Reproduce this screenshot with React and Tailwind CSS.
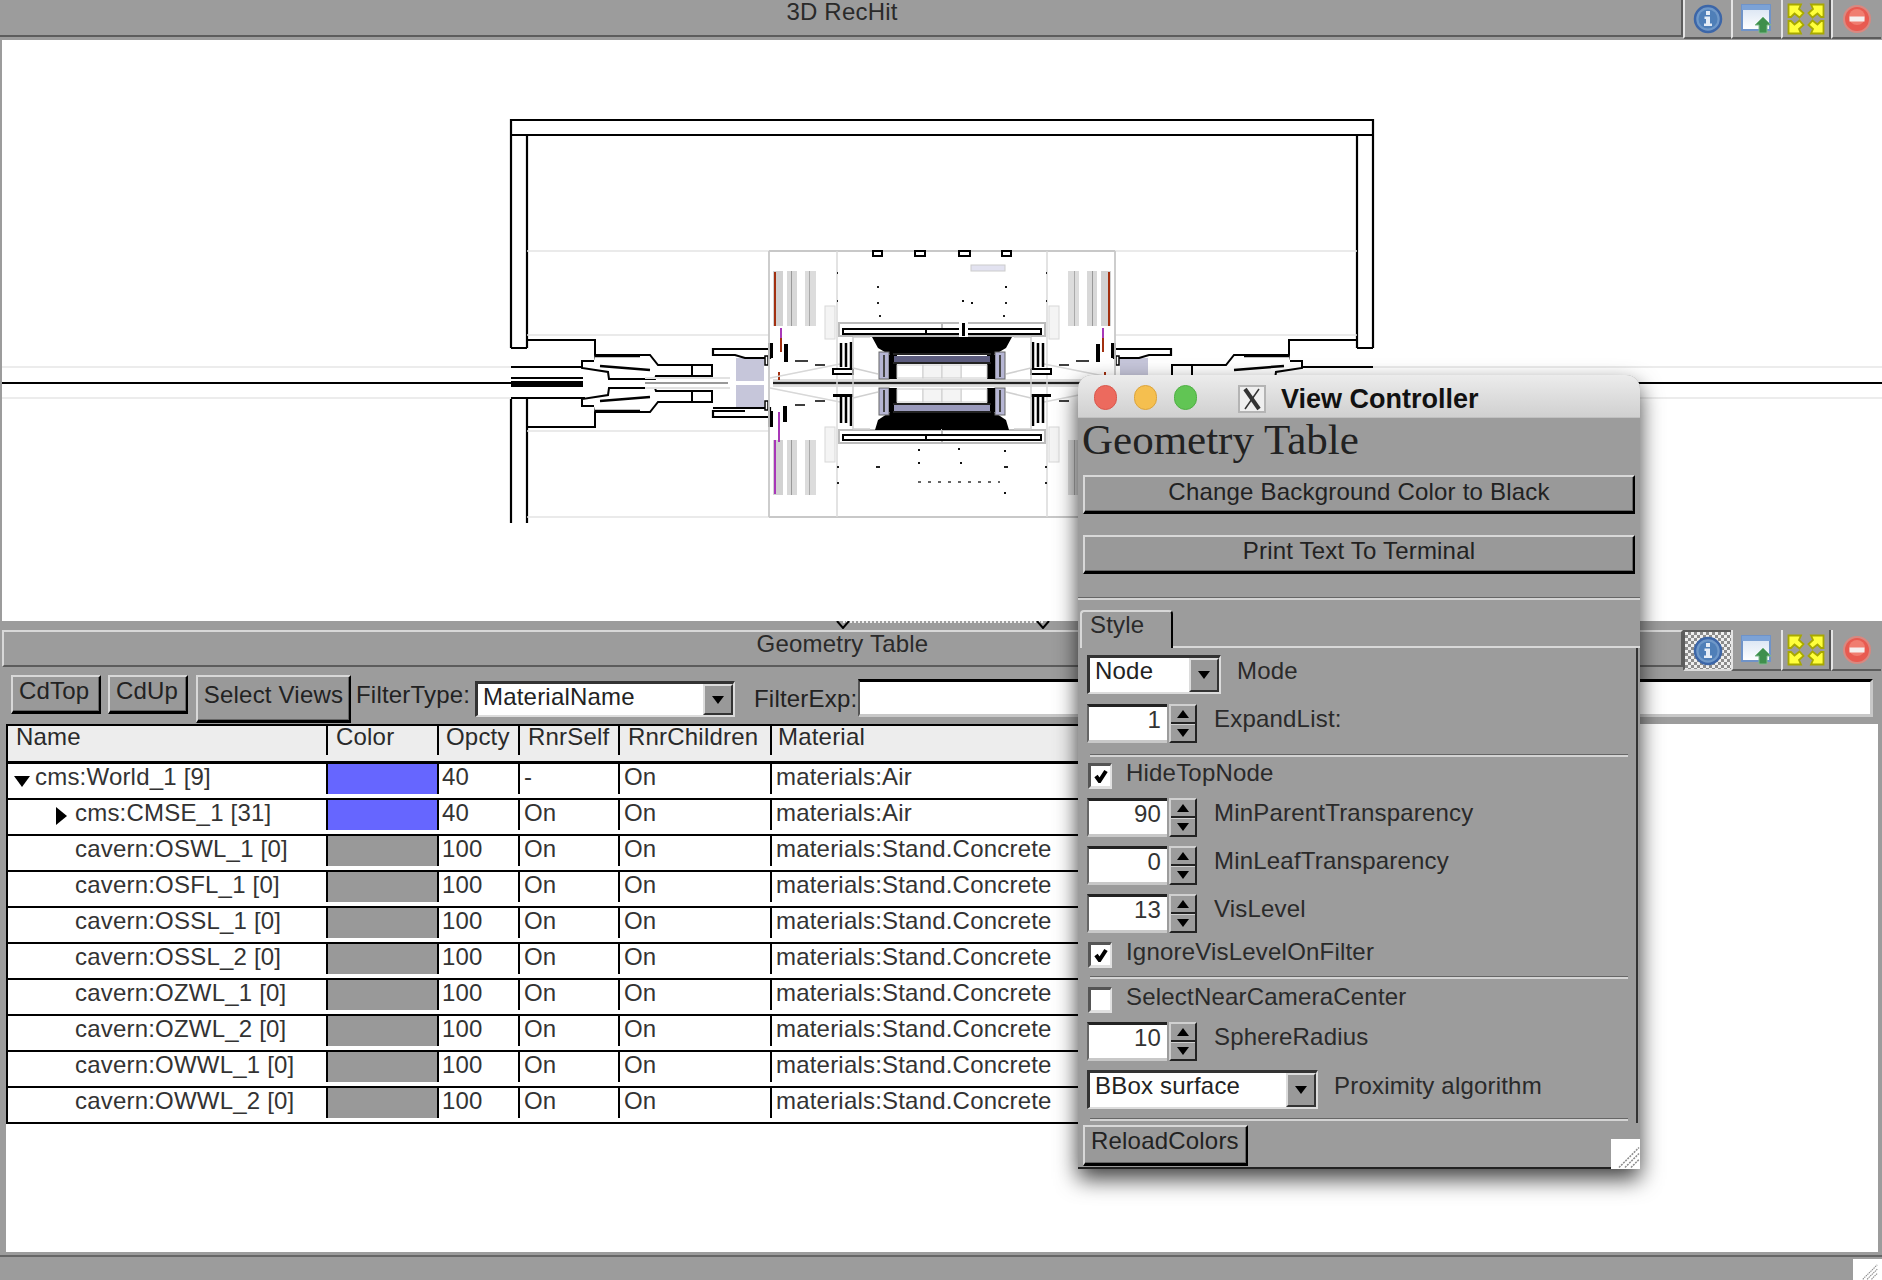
import React from "react";

const InfoIcon = () => (
  <svg width="30" height="30" viewBox="0 0 30 30">
    <circle cx="15" cy="15" r="13" fill="#6f98c8" stroke="#3c66a8" strokeWidth="2.5" />
    <circle cx="15" cy="15" r="9.5" fill="#4f7fb8" />
    <rect x="13" y="7" width="4" height="4" fill="#e4ecf6" />
    <path d="M11.5 12.5h5.5v7h2v2.5h-8v-2.5h2v-4.500h-1.500z" fill="#e4ecf6" />
  </svg>
);
const WindowIcon = () => (
  <svg width="32" height="30" viewBox="0 0 32 30">
    <defs>
      <linearGradient id="winfill" x1="0" y1="0" x2="0" y2="1">
        <stop offset="0" stopColor="#d6e2f2" />
        <stop offset="1" stopColor="#ffffff" />
      </linearGradient>
    </defs>
    <rect x="1" y="1" width="28" height="25" fill="url(#winfill)" stroke="#6f93c8" strokeWidth="2" />
    <rect x="1" y="1" width="28" height="5" fill="#7ca2d6" />
    <path d="M22 13l8 8h-4v8h-8v-8h-4z" fill="#3f8f4c" stroke="#7fb98a" strokeWidth="1" />
  </svg>
);
const MaxIcon = () => (
  <svg width="38" height="32" viewBox="0 0 38 32">
    <g fill="#ffff3c" stroke="#a8a800" strokeWidth="1.800">
      <path d="M1.500 1.500H14L12 6L16.500 10L12.500 14.500L7.500 10.500L4 14H1.500Z" />
      <path d="M36.500 1.500H24L26 6L21.500 10L25.500 14.500L30.500 10.500L34 14H36.500Z" />
      <path d="M1.500 30.500H14L12 26L16.500 22L12.500 17.500L7.500 21.500L4 18H1.500Z" />
      <path d="M36.500 30.500H24L26 26L21.500 22L25.500 17.500L30.500 21.500L34 18H36.500Z" />
    </g>
  </svg>
);
const CloseIcon = () => (
  <svg width="30" height="30" viewBox="0 0 30 30">
    <circle cx="15" cy="15" r="13" fill="#e85a50" stroke="#d98880" strokeWidth="2" />
    <circle cx="15" cy="13" r="8" fill="#f07d70" />
    <rect x="7.500" y="12.500" width="15" height="5" fill="#f6efee" />
  </svg>
);

function IconButtons({ checker }) {
  return (
    <div className="flex h-full">
      <div
        className={
          checker
            ? "w-[48px] flex items-center justify-center border-l-2 border-t-2 border-[#5c5c5c] border-b-2 border-b-[#dcdcdc] bg-[repeating-conic-gradient(#8c8c8c_0_25%,#eeeeee_0_50%)] bg-[length:6px_6px]"
            : "w-[48px] flex items-center justify-center border-l-2 border-[#e4e4e4] border-b-2 border-b-[#5c5c5c]"
        }
      >
        <InfoIcon />
      </div>
      <div className="w-[50px] flex items-center justify-center border-l-2 border-[#e4e4e4] border-b-2 border-b-[#5c5c5c]">
        <WindowIcon />
      </div>
      <div className="w-[50px] flex items-center justify-center border-l-2 border-[#e4e4e4] border-r-2 border-r-[#555] border-b-2 border-b-[#5c5c5c]">
        <MaxIcon />
      </div>
      <div className="w-[50px] flex items-center justify-center border-l-2 border-[#e4e4e4] border-b-2 border-b-[#5c5c5c]">
        <CloseIcon />
      </div>
    </div>
  );
}

const Half = () => (
  <g>
    {/* wall */}
    <path d="M511 348V119M527 135V348M511 348H527M511 523V399M527 523V399" fill="none" stroke="#000" strokeWidth="2.200" />
    <path d="M527 340H595V360M527 427H595V407" fill="none" stroke="#000" strokeWidth="2" />
    <path d="M527 251H769M527 335H769M527 431H769M527 517H769" stroke="#e4e4e4" strokeWidth="1.500" />
    <path d="M0 367H511M0 398H511" stroke="#e6e6e6" strokeWidth="1.500" />
    {/* beam pipe region */}
    <path d="M511 367H585M511 398H585M511 378H583" stroke="#000" strokeWidth="2" />
    <rect x="511" y="381" width="72" height="6" fill="#000" />
    <path d="M595 355H650L658 365H712V376H656L655 379H609L608 372L582 368V361H594" fill="#fff" stroke="#000" strokeWidth="2" />
    <path d="M595 412H650L658 402H712V391H656L655 388H609L608 395L582 399V406H594" fill="#fff" stroke="#000" strokeWidth="2" />
    <path d="M595 356H640M595 411H640M600 366L650 370M600 401L650 397" stroke="#000" strokeWidth="2.500" />
    <path d="M692 365V376M692 391V402" stroke="#000" strokeWidth="2" />
    <path d="M645 378H730M645 388H730" stroke="#e2e2e2" strokeWidth="2" />
    {/* axis */}
    <path d="M0 383H583" stroke="#000" strokeWidth="2" />
    <path d="M645 383H728" stroke="#777" strokeWidth="1.500" />
    <path d="M773 383H942" stroke="#222" strokeWidth="2.500" />
    <path d="M773 380H942M773 386H942" stroke="#bbb" strokeWidth="1" />
    {/* HF plug */}
    <rect x="736" y="358" width="28" height="23" fill="#c6c6da" />
    <rect x="736" y="385" width="28" height="24" fill="#c6c6da" />
    <path d="M713 349H770V358H745L735 355H713ZM713 408H770V417H713V411H745" fill="#fff" stroke="#000" strokeWidth="2.200" />
    <rect x="768" y="343" width="5" height="15" fill="#000" />
    <rect x="768" y="411" width="5" height="16" fill="#000" />
    <rect x="765" y="356" width="3" height="9" fill="#fff" stroke="#000" strokeWidth="1.500" />
    <rect x="765" y="401" width="3" height="9" fill="#fff" stroke="#000" strokeWidth="1.500" />
    {/* frame */}
    <path d="M769 251H942M769 517H942M769 251V517" fill="none" stroke="#c8c8c8" strokeWidth="1.800" />
    <path d="M837 251V517" stroke="#dadada" strokeWidth="1.500" />
    {/* small chambers on top */}
    <rect x="873" y="251" width="9" height="5" fill="#fff" stroke="#000" strokeWidth="2" />
    <rect x="915" y="251" width="10" height="5" fill="#fff" stroke="#000" strokeWidth="2" />
    {/* muon stripes */}
    <rect x="773" y="271" width="10" height="55" fill="#d2d2d2" />
    <rect x="774" y="272" width="2" height="54" fill="#a23010" />
    <rect x="787" y="271" width="10" height="55" fill="#d8d8d8" />
    <rect x="791" y="271" width="1" height="55" fill="#999" />
    <rect x="805" y="271" width="11" height="55" fill="#dcdcdc" />
    <rect x="809" y="271" width="1" height="55" fill="#aaa" />
    <rect x="773" y="440" width="10" height="55" fill="#d2d2d2" />
    <rect x="774" y="440" width="2" height="54" fill="#a838b8" />
    <rect x="787" y="440" width="10" height="55" fill="#d8d8d8" />
    <rect x="791" y="440" width="1" height="55" fill="#999" />
    <rect x="805" y="440" width="11" height="55" fill="#dcdcdc" />
    <rect x="809" y="440" width="1" height="55" fill="#aaa" />
    <rect x="825" y="306" width="10" height="33" fill="#f4f4f4" stroke="#d8d8d8" />
    <rect x="825" y="427" width="10" height="35" fill="#f4f4f4" stroke="#d8d8d8" />
    <rect x="780" y="328" width="2" height="16" fill="#a838b8" />
    <rect x="780" y="338" width="2" height="14" fill="#a23010" />
    <rect x="778" y="412" width="2" height="30" fill="#a838b8" />
    <rect x="778" y="372" width="2" height="8" fill="#a23010" />
    <rect x="784" y="344" width="4" height="18" fill="#000" />
    <rect x="783" y="406" width="4" height="16" fill="#000" />
    <path d="M795 361H808M815 365H825M795 405H805M815 401H825" stroke="#000" strokeWidth="1.500" />
    <path d="M770 378L840 364M770 388L840 402" stroke="#d8d8d8" strokeWidth="1.500" />
    {/* central detector */}
    <rect x="839" y="323" width="103" height="13" fill="#fff" stroke="#bbb" strokeWidth="2" />
    <rect x="843" y="329" width="115" height="5" fill="#fff" stroke="#000" strokeWidth="2" />
    <rect x="839" y="430" width="103" height="13" fill="#fff" stroke="#bbb" strokeWidth="2" />
    <rect x="843" y="435" width="115" height="5" fill="#fff" stroke="#000" strokeWidth="2" />
    <path d="M841 343V367M846 343V367M851 342V369" stroke="#000" strokeWidth="2.500" />
    <path d="M841 397V423M846 397V423M851 394V426" stroke="#000" strokeWidth="2.500" />
    <rect x="833" y="369" width="20" height="5" fill="#fff" stroke="#000" strokeWidth="2" />
    <rect x="833" y="394" width="20" height="3" fill="#000" />
    <path d="M853 337L870 337M853 429L870 429M853 337V429" fill="none" stroke="#d0d0d0" strokeWidth="1.500" />
    <path d="M853 368L878 374M853 398L878 392" stroke="#d0d0d0" strokeWidth="1.500" />
    <path d="M872 337H942V355H890L878 348ZM875 430H942V412H890L878 420Z" fill="#000" />
    <rect x="879" y="352" width="10" height="27" fill="#b6b6d4" stroke="#666" />
    <rect x="879" y="388" width="10" height="27" fill="#b6b6d4" stroke="#666" />
    <rect x="883" y="355" width="2" height="22" fill="#444" />
    <rect x="883" y="390" width="2" height="22" fill="#444" />
    <rect x="889" y="355" width="8" height="24" fill="#000" />
    <rect x="889" y="388" width="8" height="24" fill="#000" />
    <rect x="894" y="356" width="48" height="6" fill="#5c5c7e" />
    <rect x="894" y="405" width="48" height="6" fill="#9a9abc" />
    <path d="M893 354H942M893 363H942M893 404H942M893 412H942" stroke="#222" strokeWidth="2" />
    <rect x="897" y="365" width="26" height="13" fill="#fff" stroke="#ccc" />
    <rect x="923" y="365" width="19" height="13" fill="#f4f4f4" stroke="#ccc" />
    <rect x="897" y="389" width="26" height="13" fill="#fff" stroke="#ccc" />
    <rect x="923" y="389" width="19" height="13" fill="#f4f4f4" stroke="#ccc" />
    {/* dots */}
    <path d="M877 286h2v2h-2zM837 272h1v2h-1zM837 300h1v2h-1zM877 302h2v2h-2zM879 315h2v2h-2zM837 466h2v2h-2zM837 482h2v2h-2zM876 466h4v2h-4z" fill="#222" />
  </g>
);

const Detector = () => (
  <svg className="block w-full h-full" viewBox="2 40 1880 581">
    <path d="M511 120H1373M511 135H1373" stroke="#000" strokeWidth="2.200" />
    <Half />
    <g transform="translate(1884 0) scale(-1 1)">
      <Half />
    </g>
    <rect x="959" y="251" width="11" height="5" fill="#fff" stroke="#000" strokeWidth="2" />
    <rect x="971" y="265" width="34" height="6" fill="#e2e2f0" stroke="#ccc" />
    <rect x="959" y="322" width="9" height="15" fill="#fff" />
    <rect x="962" y="323" width="3" height="13" fill="#000" />
    <path d="M962 300h2v2h-2zM971 302h2v2h-2zM1005 286h2v2h-2zM958 448h2v2h-2zM960 462h2v2h-2zM918 449h2v2h-2zM918 462h2v2h-2zM1004 450h2v2h-2zM1004 492h2v2h-2z" fill="#111" />
    <path d="M918 482H1000" stroke="#333" strokeWidth="1.500" strokeDasharray="3 7" />
  </svg>
);

const rows = [
  { n: "cms:World_1 [9]", c: "#6666ff", o: "40", s: "-", ch: "On", m: "materials:Air", open: true },
  { n: "cms:CMSE_1 [31]", c: "#6666ff", o: "40", s: "On", ch: "On", m: "materials:Air", closed: true },
  ...["OSWL_1", "OSFL_1", "OSSL_1", "OSSL_2", "OZWL_1", "OZWL_2", "OWWL_1", "OWWL_2"].map((x) => ({
    n: `cavern:${x} [0]`,
    c: "#999999",
    o: "100",
    s: "On",
    ch: "On",
    m: "materials:Stand.Concrete",
  })),
];

const btn =
  "bg-[#999] border-t-2 border-l-2 border-t-[#d8d8d8] border-l-[#d8d8d8] border-b-[3px] border-r-2 border-b-black border-r-black shadow-[inset_-1px_-1px_0_#666]";

function ArrowBtn() {
  return (
    <div className="w-[30px] flex items-center justify-center bg-[#999] border-2 border-t-[#dcdcdc] border-l-[#dcdcdc] border-b-[#333] border-r-[#333]">
      <svg width="14" height="8" viewBox="0 0 14 8">
        <path d="M1 0h12L7 8z" fill="#000" />
      </svg>
    </div>
  );
}

function Combo({ text, cls }) {
  return (
    <div className={`${cls} flex bg-white border-t-[3px] border-l-[3px] border-t-[#333] border-l-[#333] border-b-2 border-r-2 border-b-[#dcdcdc] border-r-[#dcdcdc] text-[#222]`}>
      <div className="flex-1 pl-[5px] leading-[25px] whitespace-pre">{text}</div>
      <ArrowBtn />
    </div>
  );
}

function Spinner({ value }) {
  return (
    <div className="flex h-[39px]">
      <div className="w-[80px] bg-white border-t-[3px] border-l-[2px] border-t-[#222] border-l-[#666] border-b-[3px] border-b-[#c8c8c8] text-right pr-[6px] leading-[26px] text-[#333]">
        {value}
      </div>
      <div className="w-[28px] ml-[2px] flex flex-col border-2 border-t-[#d0d0d0] border-l-[#d0d0d0] border-b-[#222] border-r-[#222]">
        <div className="flex-1 flex items-center justify-center border-b-2 border-b-[#222]">
          <svg width="14" height="8" viewBox="0 0 14 8"><path d="M1 8h12L7 0z" fill="#000" /></svg>
        </div>
        <div className="flex-1 flex items-center justify-center border-t border-t-[#d0d0d0]">
          <svg width="14" height="8" viewBox="0 0 14 8"><path d="M1 0h12L7 8z" fill="#000" /></svg>
        </div>
      </div>
    </div>
  );
}

function SpinRow({ value, label, mt }) {
  return (
    <div className={`flex ${mt}`}>
      <Spinner value={value} />
      <div className="ml-[17px] leading-[30px] text-[#2a2a2a] whitespace-pre">{label}</div>
    </div>
  );
}

function CheckRow({ label, checked, mt }) {
  return (
    <div className={`flex h-[26px] pl-[1px] ${mt}`}>
      <div className="w-[24px] h-[26px] bg-white border-t-[3px] border-l-[3px] border-t-[#555] border-l-[#555] border-b-[3px] border-r-2 border-b-[#e0e0e0] border-r-[#e0e0e0] flex items-center justify-center">
        {checked && (
          <svg width="14" height="14" viewBox="0 0 14 14">
            <path d="M2 7l3.500 5L12 2" fill="none" stroke="#000" strokeWidth="4" />
          </svg>
        )}
      </div>
      <div className="ml-[14px] leading-[20px] text-[#2a2a2a] whitespace-pre">{label}</div>
    </div>
  );
}

const Sep = ({ mt }) => <div className={`h-[3px] ml-[3px] mr-[6px] border-t border-t-[#666] border-b-2 border-b-[#d4d4d4] ${mt}`} />;

function Grip({ cls }) {
  return (
    <div className={cls}>
      <svg className="block w-full h-full" viewBox="0 0 29 29">
        <path d="M8 28L28 8M14 28L28 14M20 28L28 20" stroke="#8c8c8c" strokeWidth="1.500" strokeDasharray="2 1" />
      </svg>
    </div>
  );
}

function ViewController() {
  return (
    <div className="absolute left-[1078px] top-[375px] w-[562px] h-[794px] flex flex-col rounded-t-[14px] bg-[#9c9c9c] shadow-[0_10px_22px_rgba(0,0,0,0.75)]">
      <div className="h-[43px] pt-[2px] flex items-center rounded-t-[14px] bg-gradient-to-b from-[#ececec] to-[#d0d0d0] border-b border-b-[#c0c0c0] relative">
        <div className="ml-[16px] w-[23px] h-[25px] rounded-full bg-[#ec6a5e] border border-[#d9574c]" />
        <div className="ml-[17px] w-[23px] h-[25px] rounded-full bg-[#f5bf4f] border border-[#dca43c]" />
        <div className="ml-[17px] w-[23px] h-[25px] rounded-full bg-[#61c554] border border-[#4fb044]" />
        <svg className="ml-[41px] mt-[3px]" width="28" height="28" viewBox="0 0 28 28">
          <rect x="1" y="1" width="26" height="26" fill="#efefef" stroke="#b4b4b4" strokeWidth="2" />
          <path d="M7 4L21 24" stroke="#333" strokeWidth="4" />
          <path d="M21 4L7 24" stroke="#333" strokeWidth="1.500" />
        </svg>
        <div className="ml-[15px] mt-[3px] text-[27px] leading-[32px] tracking-normal font-bold text-[#111] whitespace-pre">View Controller</div>
      </div>
      <div className="h-[57px] pl-[4px] font-['Liberation_Serif',serif] text-[43px] leading-[44px] tracking-normal text-[#222] whitespace-pre">Geometry Table</div>
      <div className={`mx-[5px] h-[39px] ${btn} text-center leading-[29px] text-[#222]`}>Change Background Color to Black</div>
      <div className={`mx-[5px] mt-[21px] h-[39px] ${btn} text-center leading-[28px] text-[#222]`}>Print Text To Terminal</div>
      <div className="mt-[23px] h-[3px] border-t border-t-[#666] border-b-2 border-b-[#d4d4d4]" />
      <div className="mt-[10px] h-[38px] flex">
        <div className="ml-[2px] w-[93px] pl-[8px] leading-[26px] rounded-t-[4px] border-t-2 border-l-2 border-t-[#d8d8d8] border-l-[#d8d8d8] border-r-2 border-r-black text-[#2a2a2a]">Style</div>
        <div className="flex-1 border-b-2 border-b-[#d8d8d8]" />
      </div>
      <div className="ml-[2px] mr-[2px] h-[475px] pl-[7px] pr-[2px] pt-[7px] border-r-2 border-r-[#333] flex flex-col">
        <div className="flex">
          <Combo text="Node" cls="w-[134px] h-[39px]" />
          <div className="ml-[16px] leading-[31px] text-[#2a2a2a]">Mode</div>
        </div>
        <SpinRow value="1" label="ExpandList:" mt="mt-[10px]" />
        <Sep mt="mt-[11px]" />
        <CheckRow label="HideTopNode" checked mt="mt-[6px]" />
        <SpinRow value="90" label="MinParentTransparency" mt="mt-[9px]" />
        <SpinRow value="0" label="MinLeafTransparency" mt="mt-[9px]" />
        <SpinRow value="13" label="VisLevel" mt="mt-[9px]" />
        <CheckRow label="IgnoreVisLevelOnFilter" checked mt="mt-[9px]" />
        <Sep mt="mt-[8px]" />
        <CheckRow label="SelectNearCameraCenter" mt="mt-[8px]" />
        <SpinRow value="10" label="SphereRadius" mt="mt-[9px]" />
        <div className="flex mt-[9px]">
          <Combo text="BBox surface" cls="w-[231px] h-[39px]" />
          <div className="ml-[16px] leading-[31px] text-[#2a2a2a] whitespace-pre">Proximity algorithm</div>
        </div>
        <Sep mt="mt-[9px]" />
      </div>
      <div className={`absolute left-[5px] top-[750px] w-[165px] h-[41px] ${btn} pl-[6px] leading-[28px] text-[#222]`}>ReloadColors</div>
      <div className="absolute left-0 right-0 bottom-0 h-[2px] bg-[#222]" />
      <Grip cls="absolute right-0 bottom-0 w-[29px] h-[30px] bg-white" />
    </div>
  );
}

export default function App() {
  const grid = "grid grid-cols-[318px_2px_109px_2px_79px_2px_98px_2px_150px_2px_1fr]";
  return (
    <div className="relative w-[1882px] h-[1280px] overflow-hidden bg-[#9c9c9c] flex flex-col font-['Liberation_Sans',sans-serif] text-[24px] tracking-[0.2px] text-[#222]">
      {/* top title */}
      <div className="h-[40px] flex">
        <div className="w-[1683px] h-[37px] border-b-2 border-r-2 border-[#5c5c5c] text-center leading-[24px] text-[#2a2a2a] pl-[3px]">3D RecHit</div>
        <div className="flex-1 h-[39px]"><IconButtons /></div>
      </div>
      {/* canvas */}
      <div className="ml-[2px] h-[581px] bg-white">
        <Detector />
      </div>
      {/* splitter */}
      <div className="h-[9px] relative">
        <div className="absolute left-[843px] top-0 w-[200px] border-t-2 border-dotted border-t-[#eee]" />
        <svg className="absolute left-[836px] top-0" width="14" height="8" viewBox="0 0 14 8"><path d="M1 0l6 7 6-7" fill="none" stroke="#000" strokeWidth="2" /></svg>
        <svg className="absolute left-[1036px] top-0" width="14" height="8" viewBox="0 0 14 8"><path d="M1 0l6 7 6-7" fill="none" stroke="#000" strokeWidth="2" /></svg>
      </div>
      {/* geometry title */}
      <div className="h-[41px] flex pl-[2px]">
        <div className="w-[1681px] h-[37px] border-t-2 border-l-2 border-t-[#d8d8d8] border-l-[#d8d8d8] border-b-2 border-r-2 border-b-[#5c5c5c] border-r-[#5c5c5c] text-center leading-[24px] text-[#2a2a2a]">Geometry Table</div>
        <div className="flex-1"><IconButtons checker /></div>
      </div>
      {/* toolbar */}
      <div className="h-[53px] flex items-start pl-[11px] pt-[4px]">
        <div className={`w-[90px] h-[39px] ${btn} pl-[6px] leading-[28px] text-[#222]`}>CdTop</div>
        <div className={`ml-[7px] w-[80px] h-[39px] ${btn} pl-[6px] leading-[28px] text-[#222]`}>CdUp</div>
        <div className={`ml-[8px] w-[155px] h-[48px] ${btn} text-center leading-[36px] text-[#222] whitespace-pre`}>Select Views</div>
        <div className="ml-[5px] w-[115px] leading-[40px] text-[#222] whitespace-pre">FilterType:</div>
        <Combo text="MaterialName" cls="ml-[4px] mt-[6px] w-[260px] h-[36px]" />
        <div className="ml-[19px] mt-[6px] w-[104px] leading-[36px] text-[#222] whitespace-pre">FilterExp:</div>
        <div className="mt-[4px] w-[1015px] h-[38px] bg-white border-t-[3px] border-t-black border-l-2 border-l-[#555] border-r-[3px] border-r-[#c8c8c8] border-b-[3px] border-b-[#c8c8c8]" />
      </div>
      {/* table panel */}
      <div className="ml-[6px] mr-[4px] h-[528px] bg-white">
        <div className="w-[1100px] border-l-2 border-t-2 border-black">
          <div className={`${grid} h-[35px] bg-[#ededed] leading-[22px] text-[#2a2a2a]`}>
            <div className="pl-[8px]">Name</div><div className="bg-black" />
            <div className="pl-[8px]">Color</div><div className="bg-black" />
            <div className="pl-[7px]">Opcty</div><div className="bg-black" />
            <div className="pl-[8px]">RnrSelf</div><div className="bg-black" />
            <div className="pl-[8px]">RnrChildren</div><div className="bg-black" />
            <div className="pl-[6px]">Material</div>
            <div />
          </div>
          <div className="h-[3px] bg-black" />
          {rows.map((r, i) => (
            <div key={i} className={`${grid} h-[36px] border-b-2 border-b-black leading-[26px] text-[#333]`}>
              <div className={`flex items-start whitespace-pre ${i === 0 ? "pl-[5px]" : i === 1 ? "pl-[48px]" : "pl-[67px]"}`}>
                {r.open && (
                  <svg className="mt-[12px] mr-[4px]" width="18" height="11" viewBox="0 0 18 11"><path d="M1 0h16L9 11z" fill="#000" /></svg>
                )}
                {r.closed && (
                  <svg className="mt-[7px] mr-[8px]" width="11" height="18" viewBox="0 0 11 18"><path d="M0 0l11 9L0 18z" fill="#000" /></svg>
                )}
                <span>{r.n}</span>
              </div>
              <div className="bg-black" />
              <div style={{ backgroundColor: r.c }} />
              <div className="bg-black" />
              <div className="pl-[3px]">{r.o}</div>
              <div className="bg-black" />
              <div className="pl-[4px]">{r.s}</div>
              <div className="bg-black" />
              <div className="pl-[4px]">{r.ch}</div>
              <div className="bg-black" />
              <div className="pl-[4px]">{r.m}</div>
              <div />
            </div>
          ))}
        </div>
      </div>
      {/* status */}
      <div className="flex-1 relative">
        <div className="mt-[3px] h-[2px] bg-[#666]" />
        <Grip cls="absolute right-0 bottom-0 w-[29px] h-[21px] bg-white" />
      </div>
      <ViewController />
    </div>
  );
}
